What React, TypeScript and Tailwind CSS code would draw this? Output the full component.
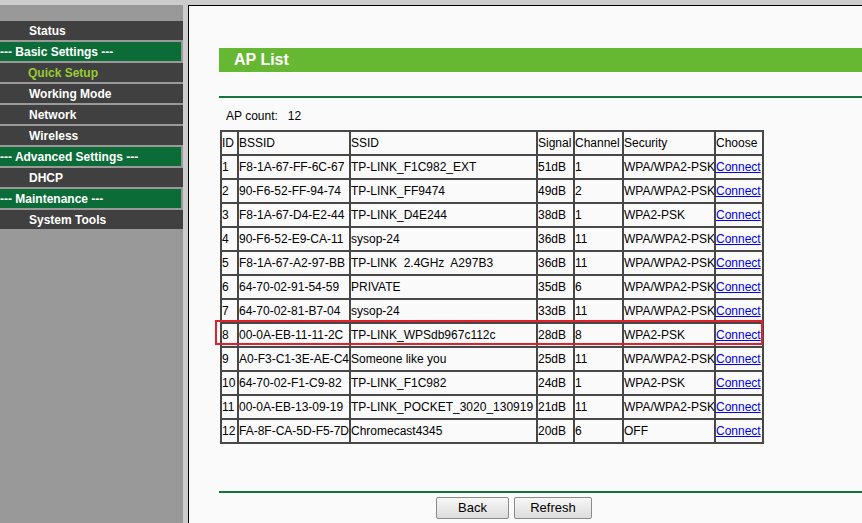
const menu = [
  { name: "Status", kind: "item" },
  { name: "--- Basic Settings ---", kind: "head" },
  { name: "Quick Setup", kind: "active" },
  { name: "Working Mode", kind: "item" },
  { name: "Network", kind: "item" },
  { name: "Wireless", kind: "item" },
  { name: "--- Advanced Settings ---", kind: "head" },
  { name: "DHCP", kind: "item" },
  { name: "--- Maintenance ---", kind: "head" },
  { name: "System Tools", kind: "item" },
];

const aps = [
  ["1", "F8-1A-67-FF-6C-67", "TP-LINK_F1C982_EXT", "51dB", "1", "WPA/WPA2-PSK"],
  ["2", "90-F6-52-FF-94-74", "TP-LINK_FF9474", "49dB", "2", "WPA/WPA2-PSK"],
  ["3", "F8-1A-67-D4-E2-44", "TP-LINK_D4E244", "38dB", "1", "WPA2-PSK"],
  ["4", "90-F6-52-E9-CA-11", "sysop-24", "36dB", "11", "WPA/WPA2-PSK"],
  ["5", "F8-1A-67-A2-97-BB", "TP-LINK  2.4GHz  A297B3", "36dB", "11", "WPA/WPA2-PSK"],
  ["6", "64-70-02-91-54-59", "PRIVATE", "35dB", "6", "WPA/WPA2-PSK"],
  ["7", "64-70-02-81-B7-04", "sysop-24", "33dB", "11", "WPA/WPA2-PSK"],
  ["8", "00-0A-EB-11-11-2C", "TP-LINK_WPSdb967c112c", "28dB", "8", "WPA2-PSK"],
  ["9", "A0-F3-C1-3E-AE-C4", "Someone like you", "25dB", "11", "WPA/WPA2-PSK"],
  ["10", "64-70-02-F1-C9-82", "TP-LINK_F1C982", "24dB", "1", "WPA2-PSK"],
  ["11", "00-0A-EB-13-09-19", "TP-LINK_POCKET_3020_130919", "21dB", "11", "WPA/WPA2-PSK"],
  ["12", "FA-8F-CA-5D-F5-7D", "Chromecast4345", "20dB", "6", "OFF"],
];

const cols = [
  { label: "ID", w: "w-[17px]" },
  { label: "BSSID", w: "w-[112px]" },
  { label: "SSID", w: "w-[187px]" },
  { label: "Signal", w: "w-[37px]" },
  { label: "Channel", w: "w-[49px]" },
  { label: "Security", w: "w-[92px]" },
  { label: "Choose", w: "w-[48px]" },
];

const cell = "border-2 border-[#474747] h-[24px] px-0 text-left font-normal whitespace-pre overflow-hidden";

export default function App() {
  return (
    <div className="w-[862px] h-[523px] overflow-hidden bg-[#cccccc] flex flex-col font-['Liberation_Sans',Arial,sans-serif] text-[12px] text-black">
      <div className="h-[5px] shrink-0" />
      <div className="flex flex-1 min-h-0">
        {/* sidebar */}
        <div className="w-[183px] shrink-0 bg-[#999999] pt-[16px] flex flex-col gap-[2px]">
          {menu.map((m) => (
            <div
              key={m.name}
              className={`h-[19px] flex items-center font-bold whitespace-pre ${
                m.kind === "head"
                  ? "w-[181px] bg-[#0b6c37] text-white pl-0"
                  : m.kind === "active"
                  ? "bg-[#404040] text-[#97cc34] pl-[28px]"
                  : "bg-[#404040] text-white pl-[29px]"
              }`}
            >
              {m.name}
            </div>
          ))}
        </div>
        <div className="w-[5px] shrink-0 bg-[#cccccc]" />
        {/* content */}
        <div className="flex-1 bg-[#fafafa] border-l border-t border-black pl-[30px] flex flex-col">
          <div className="mt-[42px] h-[24px] bg-[#66b833] flex items-center pl-[15px] text-white font-bold text-[16px]">
            AP List
          </div>
          <div className="mt-[24px] h-[2px] bg-[#13753b]" />
          <div className="mt-[11px] pl-[7px] h-[14px] leading-[14px] whitespace-pre">AP count:   12</div>
          <div className="relative mt-[7px] ml-[1px] w-[542px]">
            <table className="table-fixed border-collapse w-[542px]">
              <thead>
                <tr>
                  {cols.map((c) => (
                    <th key={c.label} className={`${cell} ${c.w}`}>
                      {c.label}
                    </th>
                  ))}
                </tr>
              </thead>
              <tbody>
                {aps.map((r) => (
                  <tr key={r[0]}>
                    {r.map((v, i) => (
                      <td key={i} className={cell}>
                        {v}
                      </td>
                    ))}
                    <td className={cell}>
                      <a href="#" className="text-[#0000ee] underline">
                        Connect
                      </a>
                    </td>
                  </tr>
                ))}
              </tbody>
            </table>
            <div className="absolute left-[-5px] top-[190px] w-[548px] h-[25px] border-2 border-[#e3202a]" />
          </div>
          <div className="mt-[47px] h-[2px] bg-[#13753b]" />
          <div className="mt-[4px] ml-[217px] flex gap-[5px] text-[13px]">
            <button className="w-[73px] h-[22px] rounded-[2px] border border-[#8a8a8a] bg-gradient-to-b from-[#f7f7f7] to-[#dcdcdc] text-black">
              Back
            </button>
            <button className="w-[78px] h-[22px] rounded-[2px] border border-[#8a8a8a] bg-gradient-to-b from-[#f7f7f7] to-[#dcdcdc] text-black">
              Refresh
            </button>
          </div>
        </div>
      </div>
    </div>
  );
}
